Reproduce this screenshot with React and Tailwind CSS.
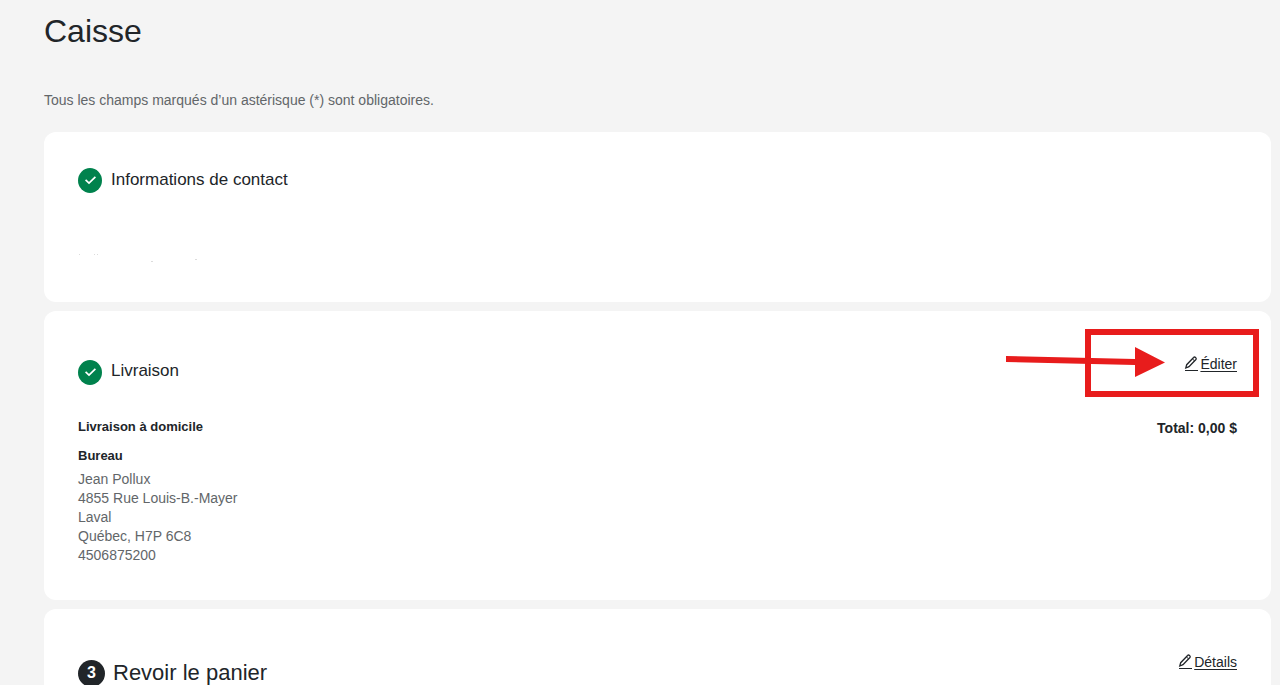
import React from 'react';

const address = [
  'Jean Pollux',
  '4855 Rue Louis-B.-Mayer',
  'Laval',
  'Québec, H7P 6C8',
  '4506875200',
];

function CheckBadge() {
  return (
    <svg width="24" height="25" viewBox="0 0 24 25" className="shrink-0" aria-hidden="true">
      <ellipse cx="12" cy="12.5" rx="12" ry="12.5" fill="#00824d" />
      <path d="M7.6 11.8l3.4 3.2 6.4-6.2" fill="none" stroke="#fff" strokeWidth="1.7" />
    </svg>
  );
}

function EditLink({ children }) {
  return (
    <a href="#" className="flex items-end gap-px text-sm leading-5 text-[#212529]">
      <svg width="15" height="20" viewBox="0 0 15 20" fill="none" stroke="currentColor" aria-hidden="true">
        <path d="M1.8 14l.9-3.3 6.9-7.2c.5-.6 1.2-.6 1.7-.2l.6.6c.5.5.4 1.1 0 1.6l-6.9 7.2-3.2 1.3z" strokeWidth="1.3" />
        <path d="M8.3 4.8l2.2 2" strokeWidth="1" />
        <path d="M1 16.5h13" strokeWidth="1" />
      </svg>
      <span className="underline underline-offset-2">{children}</span>
    </a>
  );
}

function Callout() {
  return (
    <svg
      width="254"
      height="68"
      viewBox="0 0 254 68"
      className="pointer-events-none absolute top-[18px] right-3"
      aria-hidden="true"
    >
      <rect x="83" y="3" width="168" height="62" fill="none" stroke="#e81c1c" strokeWidth="6" />
      <path d="M1 27l129 3v-12l30 15.5-30 14.5v-12l-129-3z" fill="#e81c1c" />
    </svg>
  );
}

export default function App() {
  return (
    <main className="h-screen overflow-hidden bg-[#f4f4f4] pt-2 pr-[9px] pl-11 font-['Liberation_Sans',sans-serif] text-[#212529]">
      <h1 className="text-[32px] leading-[46px]">Caisse</h1>
      <p className="mt-9 text-sm leading-5 text-[#626669]">
        Tous les champs marqués d’un astérisque (*) sont obligatoires.
      </p>

      <div className="mt-[22px] flex flex-col gap-[9px]">
        {/* CONTACT */}
        <section className="h-[170px] rounded-xl bg-white px-[34px] pt-9">
          <div className="flex gap-[9px]">
            <CheckBadge />
            <h2 className="text-[17px] leading-6">Informations de contact</h2>
          </div>
          <svg width="120" height="10" viewBox="0 0 120 10" className="mt-[60px]" fill="#dcdcdc" aria-hidden="true">
            <path d="M1 1h1v1h-1zM16 1h1v1h-1zM19 1h1v1h-1zM73 8h2v1h-2zM117 6h2v1h-2z" />
          </svg>
        </section>

        {/* DELIVERY */}
        <section className="relative flex items-start justify-between rounded-xl bg-white px-[34px] pt-[43px] pb-[35px]">
          <div>
            <div className="flex items-end gap-[9px] pt-[5px]">
              <CheckBadge />
              <h2 className="pb-[2px] text-[17px] leading-6">Livraison</h2>
            </div>
            <h3 className="mt-8 text-[13px] leading-5 font-bold">Livraison à domicile</h3>
            <h3 className="mt-[9px] text-[13px] leading-5 font-bold">Bureau</h3>
            <address className="mt-1 text-sm leading-[19px] text-[#626669] not-italic">
              {address.map((line) => (
                <div key={line}>{line}</div>
              ))}
            </address>
          </div>
          <div className="flex flex-col items-end gap-11">
            <EditLink>Éditer</EditLink>
            <p className="text-sm leading-5 font-bold">Total: 0,00 $</p>
          </div>
          <Callout />
        </section>

        {/* CART REVIEW */}
        <section className="flex items-start justify-between rounded-xl bg-white px-[34px] pt-[43px] pb-9">
          <div className="flex items-center gap-2 pt-[7px]">
            <span className="flex size-[27px] items-center justify-center rounded-full bg-[#212529] text-base font-bold text-white">
              3
            </span>
            <h2 className="text-[22px] leading-7">Revoir le panier</h2>
          </div>
          <EditLink>Détails</EditLink>
        </section>
      </div>
    </main>
  );
}
